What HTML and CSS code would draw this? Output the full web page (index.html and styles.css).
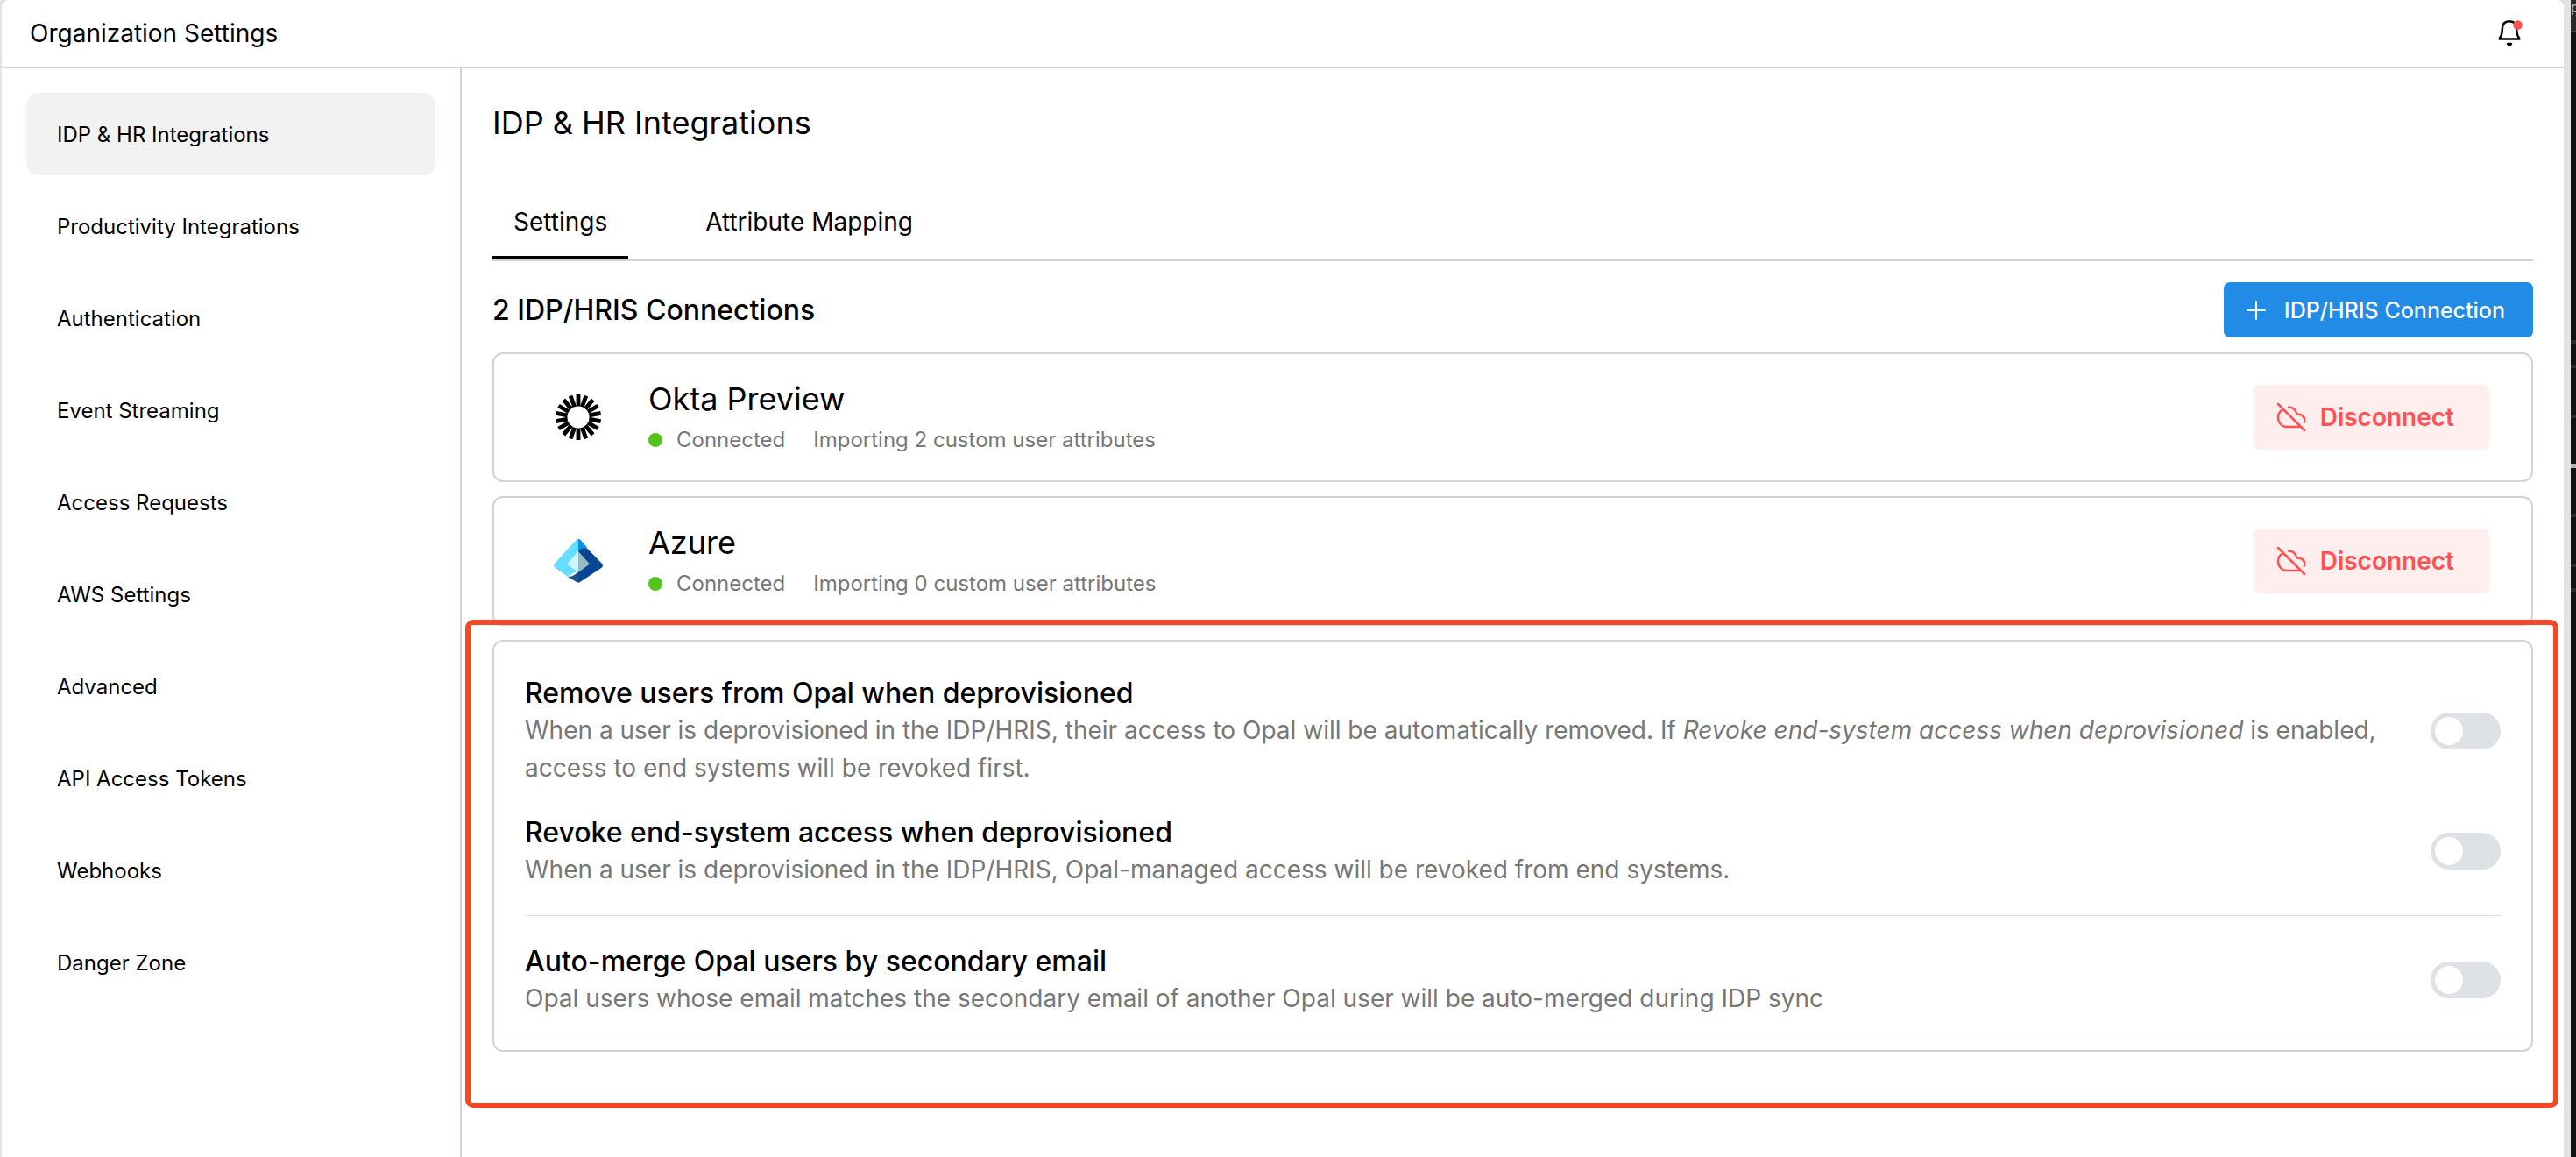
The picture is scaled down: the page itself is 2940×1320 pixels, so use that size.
FILE: index.html
```html
<!DOCTYPE html>
<html lang="en">
<head>
    <meta charset="UTF-8">
    <meta name="viewport" content="width=device-width, initial-scale=1.0">
    <title>Organization Settings</title>
    <link rel="stylesheet" href="styles.css">
</head>
<body>
    <div class="app">
        <header class="topbar">
            <h1>Organization Settings</h1>
            <button class="bell" type="button" aria-label="Notifications">
                <svg viewBox="0 0 32 32" width="32" height="32" fill="none" stroke="#000" stroke-width="2.5" stroke-linecap="round" stroke-linejoin="round">
                    <path d="M4.500 22.500h23l-2.300-4.500c-.8-2-.9-4-1-6.500 0-6-3.200-9.200-8.200-9.200s-8.200 3.200-8.200 9.200c-.1 2.500-.2 4.500-1 6.500z"/>
                    <path d="M14 28c1 1.800 3 1.800 4 0z"/>
                    <circle cx="25.500" cy="6.500" r="5.300" fill="#ff5050" stroke="none"/>
                </svg>
            </button>
        </header>

        <div class="layout">
            <nav class="sidebar">
                <a href="#" class="active">IDP &amp; HR Integrations</a>
                <a href="#">Productivity Integrations</a>
                <a href="#">Authentication</a>
                <a href="#">Event Streaming</a>
                <a href="#">Access Requests</a>
                <a href="#">AWS Settings</a>
                <a href="#">Advanced</a>
                <a href="#">API Access Tokens</a>
                <a href="#">Webhooks</a>
                <a href="#">Danger Zone</a>
            </nav>

            <main class="content">
                <h2>IDP &amp; HR Integrations</h2>

                <div class="tabs" role="tablist">
                    <button type="button" role="tab" aria-selected="true" class="tab selected">Settings</button>
                    <button type="button" role="tab" aria-selected="false" class="tab">Attribute Mapping</button>
                </div>

                <div class="section-head">
                    <h3>2 IDP/HRIS Connections</h3>
                    <button type="button" class="add-btn">
                        <svg viewBox="0 0 22 22" width="22" height="22" stroke="#fff" stroke-width="2" stroke-linecap="round">
                            <path d="M11 1v20M1 11h20"/>
                        </svg>
                        IDP/HRIS Connection
                    </button>
                </div>

                <div class="cards">
                    <div class="card connection">
                        <svg class="logo" viewBox="-28 -28 56 56" width="56" height="56" stroke="#000" stroke-width="4.800">
                            <path id="ray" d="M0-26v13.500M0 12.500V26"/>
                            <use href="#ray" transform="rotate(20)"/>
                            <use href="#ray" transform="rotate(40)"/>
                            <use href="#ray" transform="rotate(60)"/>
                            <use href="#ray" transform="rotate(80)"/>
                            <use href="#ray" transform="rotate(100)"/>
                            <use href="#ray" transform="rotate(120)"/>
                            <use href="#ray" transform="rotate(140)"/>
                            <use href="#ray" transform="rotate(160)"/>
                        </svg>
                        <div class="info">
                            <h4>Okta Preview</h4>
                            <p class="status"><span class="dot"></span><span>Connected</span><span class="detail">Importing 2 custom user attributes</span></p>
                        </div>
                        <button type="button" class="disconnect">
                            <svg viewBox="0 0 34 34" width="34" height="34" fill="none" stroke="currentColor" stroke-width="2.500" stroke-linecap="round" stroke-linejoin="round">
                                <path d="M2 2l30 30M7 8.500C3.500 10.500 2 14 2 17.500c0 6 4.500 10.500 10 10.500h14M14 5.500c5 0 8 3 9.500 8C29 13 33.500 17 32 22.500"/>
                            </svg>
                            Disconnect
                        </button>
                    </div>

                    <div class="card connection">
                        <svg class="logo" viewBox="0 0 56 56" width="56" height="56">
                            <path d="M28 3c-1 0-2 .4-2.800 1.300L1 31c-1.400 1.600-1.200 3.600.4 4.800l14 9.700L28 39z" fill="#66ddff"/>
                            <path d="M28 3c1 0 2 .4 2.800 1.300L38 12.500 28 17z" fill="#0294e4"/>
                            <path d="M28 17c2-3 6-4.500 10-3.500L55 31c1.400 1.600 1.200 3.600-.4 4.800L30 52c-.6.600-1.300.8-2 .8V40z" fill="#064694"/>
                            <path d="M15 45.500c5 1 9-1 13-5.500v12.800c-.7 0-1.400-.2-2-.8z" fill="#234f87"/>
                            <path d="M28 17v24L15 31.500z" fill="#cbf8ff"/>
                            <path d="M28 17v24l13-9.500z" fill="#97bbc0"/>
                        </svg>
                        <div class="info">
                            <h4>Azure</h4>
                            <p class="status"><span class="dot"></span><span>Connected</span><span class="detail">Importing 0 custom user attributes</span></p>
                        </div>
                        <button type="button" class="disconnect">
                            <svg viewBox="0 0 34 34" width="34" height="34" fill="none" stroke="currentColor" stroke-width="2.500" stroke-linecap="round" stroke-linejoin="round">
                                <path d="M2 2l30 30M7 8.500C3.500 10.500 2 14 2 17.500c0 6 4.500 10.500 10 10.500h14M14 5.500c5 0 8 3 9.500 8C29 13 33.500 17 32 22.500"/>
                            </svg>
                            Disconnect
                        </button>
                    </div>

                    <div class="card options">
                        <div class="option">
                            <div class="option-text">
                                <label for="remove-users">Remove users from Opal when deprovisioned</label>
                                <p>When a user is deprovisioned in the IDP/HRIS, their access to Opal will be automatically removed. If <em>Revoke end-system access when deprovisioned</em> is enabled, access to end systems will be revoked first.</p>
                            </div>
                            <input type="checkbox" role="switch" id="remove-users" class="switch">
                        </div>
                        <div class="option">
                            <div class="option-text">
                                <label for="revoke-access">Revoke end-system access when deprovisioned</label>
                                <p>When a user is deprovisioned in the IDP/HRIS, Opal-managed access will be revoked from end systems.</p>
                            </div>
                            <input type="checkbox" role="switch" id="revoke-access" class="switch">
                        </div>
                        <hr>
                        <div class="option">
                            <div class="option-text">
                                <label for="auto-merge">Auto-merge Opal users by secondary email</label>
                                <p>Opal users whose email matches the secondary email of another Opal user will be auto-merged during IDP sync</p>
                            </div>
                            <input type="checkbox" role="switch" id="auto-merge" class="switch">
                        </div>
                        <div class="highlight"></div>
                    </div>
                </div>
            </main>
        </div>
    </div>
    <div class="behind">p</div>
</body>
</html>
```

FILE: styles.css
```css
* {
    box-sizing: border-box;
    margin: 0;
    padding: 0;
}

body {
    font-family: Inter, 'Liberation Sans', sans-serif;
    font-size: 28px;
    color: #000;
    background: #e4e3e1;
    display: flex;
    min-height: 100vh;
    padding-left: 2px;
}

button {
    font: inherit;
    color: inherit;
    background: none;
    border: none;
    cursor: pointer;
}

h1, h2, h4 {
    font-weight: 400;
}

.app {
    flex: 1;
    min-width: 0;
    display: flex;
    flex-direction: column;
    background: #fff;
    border-radius: 8px 8px 0 0;
    margin-right: 8px;
}

/* sliver of the window behind */
.behind {
    width: 6px;
    overflow: hidden;
    color: #bbb;
    font-size: 16px;
    line-height: 16px;
    background:
        linear-gradient(#b4b4b4, #b4b4b4) 0 529px / 100% 5px no-repeat,
        linear-gradient(#2c2c2d, #2c2c2d) 0 388px / 100% 4px no-repeat,
        linear-gradient(#2c2c2d, #2c2c2d) 0 416px / 100% 4px no-repeat,
        linear-gradient(#2c2c2d, #2c2c2d) 0 473px / 100% 4px no-repeat,
        linear-gradient(#2c2c2d, #2c2c2d) 0 586px / 100% 4px no-repeat,
        linear-gradient(#2c2c2d, #2c2c2d) 0 643px / 100% 4px no-repeat,
        linear-gradient(#2c2c2d, #2c2c2d) 0 671px / 100% 4px no-repeat,
        linear-gradient(#454546, #454546) 0 35px / 100% 2px no-repeat,
        linear-gradient(#2a2a2b, #2a2a2b) 0 0 / 100% 35px no-repeat,
        #121213;
}

.topbar {
    display: flex;
    justify-content: space-between;
    align-items: center;
    height: 78px;
    padding: 0 46px 0 32px;
    border-bottom: 2px solid #ced4da;
}

.topbar h1 {
    font-size: 28px;
}

.bell {
    display: flex;
}

.layout {
    flex: 1;
    display: flex;
}

.sidebar {
    width: 525px;
    flex-shrink: 0;
    display: flex;
    flex-direction: column;
    gap: 11px;
    padding: 28px;
    border-right: 2px solid #ced4da;
}

.sidebar a {
    display: flex;
    align-items: center;
    height: 94px;
    padding: 0 35px;
    border-radius: 14px;
    font-size: 24px;
    color: inherit;
    text-decoration: none;
}

.sidebar a.active {
    background: #f2f2f2;
}

.content {
    flex: 1;
    min-width: 0;
    padding: 40px 35px;
}

.content h2 {
    font-size: 36px;
    line-height: 44px;
}

.tabs {
    display: flex;
    gap: 64px;
    margin-top: 48px;
    border-bottom: 2px solid #ced4da;
}

.tab {
    height: 86px;
    padding: 4px 24px 0;
    border-bottom: 4px solid transparent;
}

.tab.selected {
    border-color: #000;
}

.section-head {
    display: flex;
    justify-content: space-between;
    align-items: center;
    margin: 24px 0 17px;
}

.section-head h3 {
    font-size: 32px;
    font-weight: 500;
}

.add-btn {
    display: flex;
    align-items: center;
    gap: 21px;
    height: 63px;
    padding: 0 32px 0 26px;
    border-radius: 7px;
    background: #228be6;
    color: #fff;
    font-size: 25px;
    font-weight: 500;
}

.cards {
    display: flex;
    flex-direction: column;
    gap: 16px;
}

.card {
    border: 2px solid #ced4da;
    border-radius: 12px;
}

.connection {
    display: flex;
    align-items: center;
    height: 148px;
    padding: 0 48px 0 68px;
}

.info {
    flex: 1;
    margin-left: 52px;
    padding-top: 2px;
}

.info h4 {
    font-size: 36px;
    line-height: 50px;
}

.status {
    display: flex;
    align-items: center;
    color: #777;
    font-size: 24px;
    line-height: 44px;
}

.dot {
    width: 16px;
    height: 16px;
    margin-right: 16px;
    border-radius: 50%;
    background: #52c41a;
}

.detail {
    margin-left: 32px;
}

.disconnect {
    display: flex;
    align-items: center;
    gap: 16px;
    height: 74px;
    padding: 0 40px 0 26px;
    border-radius: 7px;
    background: #ffeeee;
    color: #ff5252;
    font-weight: 600;
}

.options {
    position: relative;
    display: flex;
    flex-direction: column;
    gap: 30px;
    padding: 37px 35px;
}

.option {
    display: flex;
    align-items: center;
    justify-content: space-between;
    gap: 56px;
    line-height: 43px;
}

.option label {
    display: block;
    font-size: 32px;
    font-weight: 500;
}

.option p {
    color: #777;
}

.options hr {
    border: none;
    border-top: 1px solid #dee2e6;
}

.switch {
    appearance: none;
    flex-shrink: 0;
    display: flex;
    align-items: center;
    width: 80px;
    height: 42px;
    padding: 0 5px;
    border-radius: 21px;
    background: #dee2e6;
    cursor: pointer;
}

.switch::before {
    content: "";
    width: 32px;
    height: 32px;
    border-radius: 50%;
    background: #fff;
}

.switch:checked {
    justify-content: flex-end;
    background: #228be6;
}

.highlight {
    position: absolute;
    inset: -25px -31px -66px -33px;
    border: 6px solid #f64825;
    border-radius: 9px;
    pointer-events: none;
}
```
